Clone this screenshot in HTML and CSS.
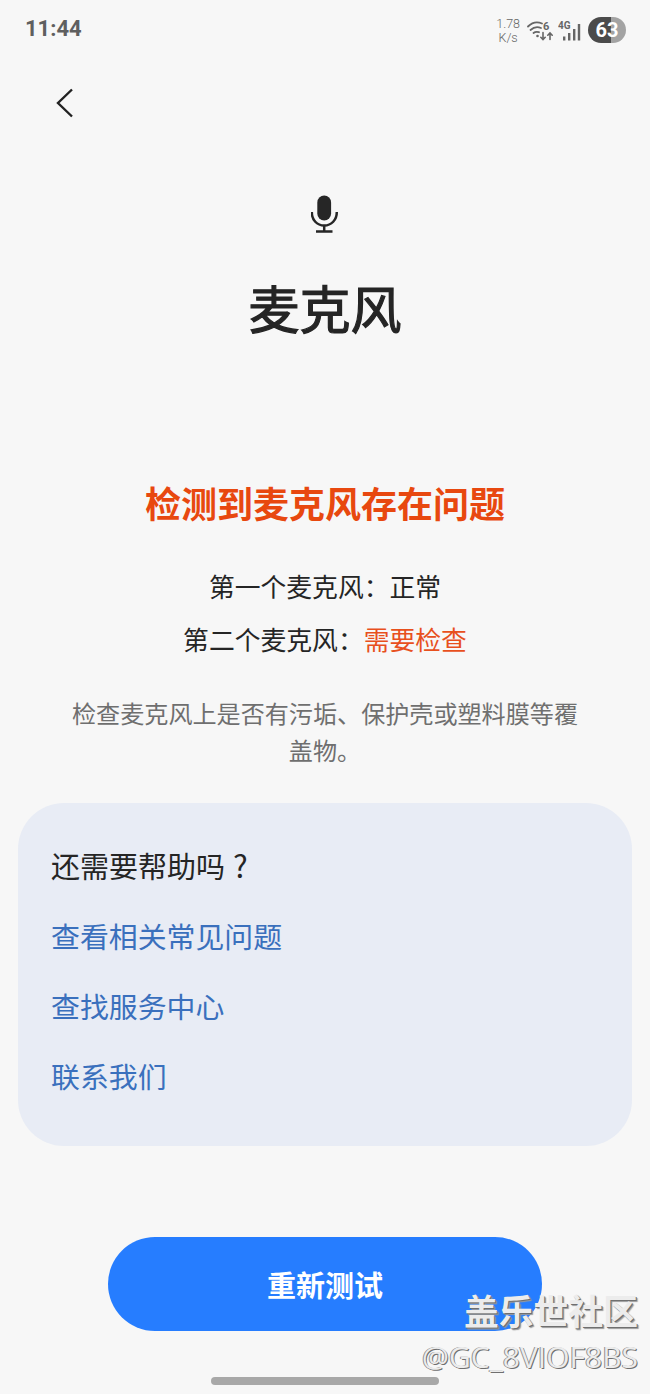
FILE: index.html
```html
<!DOCTYPE html>
<html lang="zh-CN">
<head>
    <meta charset="UTF-8">
    <meta name="viewport" content="width=device-width, initial-scale=1.0">
    <title>麦克风</title>
    <link rel="stylesheet" href="styles.css">
</head>
<body>
    <div class="status-bar">
        <span class="time">11:44</span>
        <div class="status-icons">
            <span class="speed">1.78<br>K/s</span>
            <svg class="wifi" width="26" height="20" viewBox="0 0 26 20" fill="none" stroke="#666" stroke-linecap="round">
                <path d="M1 5.500C5 1.500 10.500 0.500 15 2.500" stroke-width="1.800"/>
                <path d="M3.500 9C6.500 6.300 10.500 5.500 14 7" stroke-width="1.800"/>
                <path d="M6.500 12C8 10.800 10 10.500 12 11.200" stroke-width="1.800"/>
                <circle cx="10.500" cy="15" r="1.300" fill="#666" stroke="none"/>
                <path d="M16 11.500V18.500M13.800 16.300L16 18.500L18.200 16.300M23 18.500V12M20.800 14.200L23 12L25.200 14.200" stroke-width="1.600"/>
                <text x="16" y="9" class="wifi-six">6</text>
            </svg>
            <svg class="signal" width="23" height="20" viewBox="0 0 23 20">
                <text x="0" y="8" class="four-g">4G</text>
                <rect x="5" y="15.500" width="2.400" height="4" fill="#666"/>
                <rect x="10" y="12" width="2.400" height="7.500" fill="#666"/>
                <rect x="15" y="8" width="2.400" height="11.500" fill="#666"/>
                <rect x="19.800" y="3" width="2.400" height="16.500" fill="#666"/>
            </svg>
            <span class="battery">63</span>
        </div>
    </div>

    <div class="top-bar">
        <svg width="18" height="30" viewBox="0 0 18 30" fill="none" stroke="#222" stroke-width="2.400">
            <path d="M16 1.500L2 15L16 28.500"/>
        </svg>
    </div>

    <div class="header">
        <svg class="mic" width="28" height="38" viewBox="1 0 28 38" fill="none" stroke="#262626" stroke-width="2.500">
            <rect x="7.300" y="0.500" width="13.800" height="25" rx="6.900" fill="#262626" stroke="none"/>
            <path d="M1.800 17C1.800 25 7 30.500 14.200 30.500C21.400 30.500 26.800 25 26.800 17"/>
            <path d="M14.200 30.500V36.500M6 36.500H22.500"/>
        </svg>
        <h1>麦克风</h1>
    </div>

    <div class="result">
        <h2>检测到麦克风存在问题</h2>
        <p class="line">第一个麦克风：正常</p>
        <p class="line">第二个麦克风：<span class="bad">需要检查</span></p>
        <p class="desc">检查麦克风上是否有污垢、保护壳或塑料膜等覆盖物。</p>
    </div>

    <div class="help-card">
        <h3>还需要帮助吗<span class="qmark">?</span></h3>
        <a href="#">查看相关常见问题</a>
        <a href="#">查找服务中心</a>
        <a href="#">联系我们</a>
    </div>

    <div class="footer">
        <button type="button">重新测试</button>
    </div>

    <div class="home-bar"></div>

    <div class="watermark">
        <div class="wm-title">盖乐世社区</div>
        <div class="wm-user">@GC_8VIOF8BS</div>
    </div>
</body>
</html>
```

FILE: styles.css
```css
* {
    box-sizing: border-box;
}

body {
    margin: 0;
    height: 1394px;
    position: relative;
    overflow: hidden;
    background-color: #f7f7f7;
    color: #252525;
    font-family: "Noto Sans CJK SC", "Noto Sans", sans-serif;
}

.status-bar {
    height: 60px;
    padding: 15px 24px 0 25px;
    display: flex;
    justify-content: space-between;
    align-items: flex-start;
}

.time {
    font-family: Roboto, sans-serif;
    font-size: 22px;
    font-weight: 700;
    line-height: 28px;
    color: #5f5f5f;
}

.status-icons {
    display: flex;
    align-items: center;
    gap: 5px;
    color: #666;
}

.status-icons svg {
    margin-top: 2px;
}

.speed {
    font-family: Roboto, sans-serif;
    font-size: 12.500px;
    font-weight: 300;
    line-height: 14px;
    text-align: center;
    margin-top: 2px;
    margin-right: 2px;
    color: #666;
}

.wifi-six {
    font-family: Roboto, sans-serif;
    font-size: 11px;
    font-weight: 700;
    fill: #666;
    stroke: none;
}

.four-g {
    font-family: Roboto, sans-serif;
    font-size: 10px;
    font-weight: 700;
    fill: #666;
}

.battery {
    width: 38px;
    height: 26px;
    margin-left: 2px;
    border-radius: 13px;
    background: linear-gradient(to right, #4b4b4b 60%, #a3a3a3 60%);
    color: #fff;
    font-family: Roboto, sans-serif;
    font-size: 20px;
    font-weight: 700;
    line-height: 26px;
    text-align: center;
}

.top-bar {
    height: 60px;
    padding: 28px 0 0 56px;
}

.header {
    margin-top: 75px;
    display: flex;
    flex-direction: column;
    align-items: center;
}

.header h1 {
    margin: 39px 0 0;
    font-size: 51px;
    font-weight: 400;
    line-height: 70px;
    -webkit-text-stroke: 1.2px #252525;
}

.result {
    margin-top: 135px;
    padding: 0 70px;
    text-align: center;
}

.result h2 {
    margin: 0;
    font-size: 36px;
    font-weight: 700;
    line-height: 50px;
    color: #e8480f;
}

.line {
    margin: 0;
    font-size: 25.800px;
    line-height: 53px;
}

.result h2 + .line {
    margin-top: 32px;
}

.bad {
    color: #e8501d;
}

.desc {
    margin: 29px 0 0;
    font-size: 24.100px;
    line-height: 37px;
    color: #6f6f6f;
}

.help-card {
    margin: 35px 18px 0;
    height: 343px;
    padding: 42px 33px 0;
    border-radius: 46px;
    background-color: #e8ecf5;
    display: flex;
    flex-direction: column;
    gap: 30px;
}

.help-card h3 {
    margin: 0;
    font-size: 29px;
    font-weight: 400;
    line-height: 40px;
}

.qmark {
    margin-left: 8px;
    font-size: 31px;
}

.help-card a {
    font-size: 28.900px;
    line-height: 40px;
    color: #3a70bd;
    text-decoration: none;
}

.footer {
    margin-top: 91px;
    display: flex;
    justify-content: center;
}

.footer button {
    width: 434px;
    height: 94px;
    border: none;
    border-radius: 47px;
    background-color: #267dff;
    color: #fff;
    font-family: inherit;
    font-size: 29px;
    font-weight: 700;
}

.home-bar {
    position: absolute;
    left: 211px;
    top: 1377px;
    width: 228px;
    height: 8px;
    border-radius: 4px;
    background-color: #a8a8a8;
}

.watermark {
    position: absolute;
    right: 12px;
    top: 1288px;
    text-align: right;
}

.wm-title {
    font-size: 34.800px;
    font-weight: 700;
    line-height: 44px;
    color: #ececec;
    text-shadow: 1px 1px 0 #6f6f6f, 2px 2px 1px #999;
}

.wm-user {
    margin-top: 4px;
    font-family: "Open Sans", sans-serif;
    font-size: 30px;
    line-height: 42px;
    color: #ececec;
    text-shadow: 1px 1px 0 #6f6f6f, -1px 0 0 #8f8f8f;
}
```
